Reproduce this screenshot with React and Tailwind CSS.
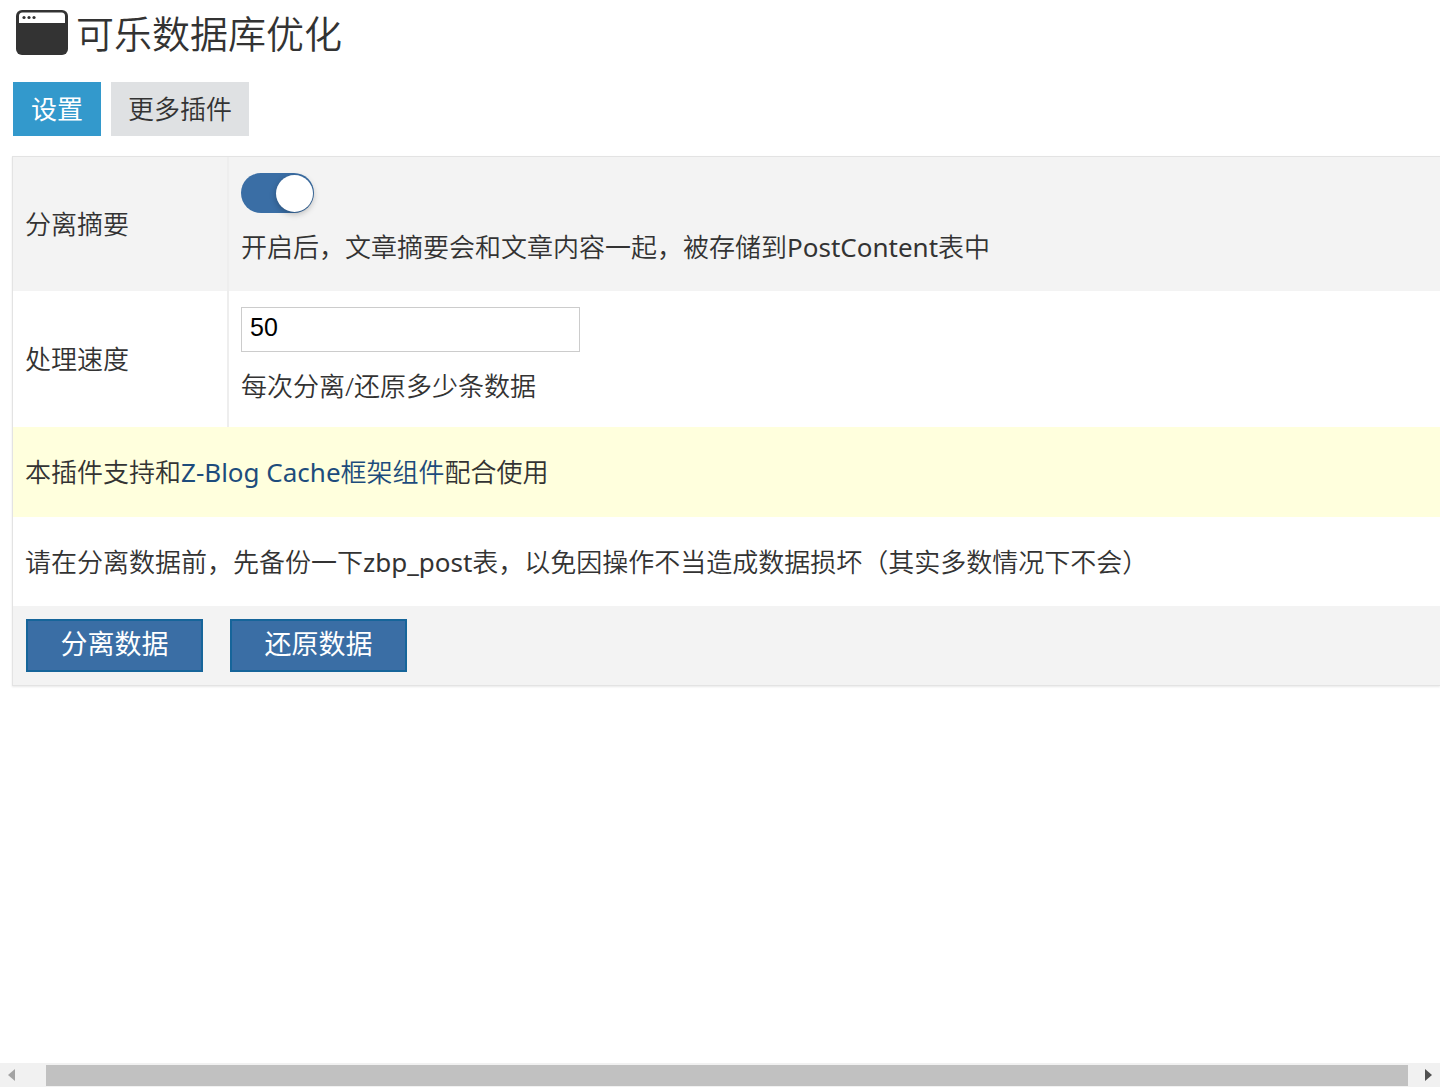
import React, { useState } from "react";

const WindowIcon = () => (
  <svg
    xmlns="http://www.w3.org/2000/svg"
    viewBox="0 0 52 46"
    className="w-[52px] h-[46px] shrink-0"
    aria-hidden="true"
  >
    <rect width="52" height="45" rx="6" fill="#333" />
    <path d="M3 13V6a3.500 3.500 0 013.500-3.500h39A3.500 3.500 0 0149 6v7z" fill="#fff" />
    <circle cx="8" cy="7.500" r="1.600" fill="#333" />
    <circle cx="13" cy="7.500" r="1.600" fill="#333" />
    <circle cx="18" cy="7.500" r="1.600" fill="#333" />
  </svg>
);

const ScrollBar = () => (
  <div className="flex items-center h-6 bg-[#f1f1f1]">
    <button type="button" aria-label="向左滚动" className="w-[46px] h-6 pl-2 flex items-center">
      <svg viewBox="0 0 7 12" className="w-[7px] h-3">
        <path d="M7 0v12L0 6z" fill="#a3a3a3" />
      </svg>
    </button>
    <div className="flex-1 h-[21px] bg-[#c1c1c1]" />
    <button type="button" aria-label="向右滚动" className="w-8 h-6 pr-2 flex items-center justify-end">
      <svg viewBox="0 0 7 12" className="w-[7px] h-3">
        <path d="M0 0v12l7-6z" fill="#505050" />
      </svg>
    </button>
  </div>
);

const buttonClass =
  "w-[177px] h-[53px] pb-1 border-2 border-[#16659a] bg-[#3a6ea5] text-[27px] leading-8 font-normal text-white";

const App = () => {
  const [separate, setSeparate] = useState(true);
  const [speed, setSpeed] = useState("50");

  return (
    <div className="min-h-screen flex flex-col overflow-hidden bg-white text-[#333] text-[26px] leading-9 font-[350] font-['Noto_Sans','Noto_Sans_CJK_SC',sans-serif]">
      <main className="flex-1 pl-3">
        <header className="flex items-center gap-2 h-[70px] pl-1 pb-1">
          <WindowIcon />
          <h1 className="text-[38px] leading-[56px]">可乐数据库优化</h1>
        </header>

        <nav className="flex gap-[10px] mt-3 pl-px leading-[54px]">
          <a href="#setting" className="px-[18px] bg-[#3399cc] font-normal text-white">
            设置
          </a>
          <a href="#more" className="px-[17px] bg-[#dfe1e3]">
            更多插件
          </a>
        </nav>

        <form className="mt-5" onSubmit={(e) => e.preventDefault()}>
          <table className="w-full border-separate border-spacing-0 text-left border border-r-0 border-[#e3e3e3] shadow-[0_1px_2px_#e8e8e8]">
            <tbody>
              <tr className="h-[134px] bg-[#f3f3f3]">
                <th className="w-[216px] px-3 font-[350] border-r-2 border-[#eeeeee]">
                  <label htmlFor="separate">分离摘要</label>
                </th>
                <td className="px-3 pt-4 align-top">
                  <input
                    id="separate"
                    type="checkbox"
                    role="switch"
                    checked={separate}
                    onChange={(e) => setSeparate(e.target.checked)}
                    className="appearance-none flex items-center w-[73px] h-10 px-px rounded-full bg-[#bbbbbb] checked:bg-[#3a6ea5] checked:justify-end before:w-[37px] before:h-[37px] before:rounded-full before:bg-white before:shadow-[0_2px_6px_#00000044]"
                  />
                  <p className="mt-4">
                    开启后，文章摘要会和文章内容一起，被存储到
                    <span className="font-normal">PostContent</span>表中
                  </p>
                </td>
              </tr>
              <tr className="h-[136px]">
                <th className="px-3 font-[350] border-r-2 border-[#eeeeee]">
                  <label htmlFor="speed">处理速度</label>
                </th>
                <td className="px-3 pt-4 align-top">
                  <input
                    id="speed"
                    type="text"
                    value={speed}
                    onChange={(e) => setSpeed(e.target.value)}
                    className="block w-[339px] h-[45px] px-2 pb-1 border border-[#cccccc] bg-white text-black text-[25px] font-['Liberation_Sans',sans-serif]"
                  />
                  <p className="mt-4">每次分离/还原多少条数据</p>
                </td>
              </tr>
              <tr className="h-[90px] bg-[#ffffdd]">
                <td colSpan={2} className="px-3">
                  本插件支持和
                  <a href="#cache" className="text-[#1d4c7c]">
                    <span className="font-normal">Z-Blog Cache</span>框架组件
                  </a>
                  配合使用
                </td>
              </tr>
              <tr className="h-[89px]">
                <td colSpan={2} className="px-3">
                  请在分离数据前，先备份一下
                  <span className="font-normal">zbp_post</span>
                  表，以免因操作不当造成数据损坏（其实多数情况下不会）
                </td>
              </tr>
              <tr className="h-[79px] bg-[#f3f3f3]">
                <td colSpan={2} className="px-[13px]">
                  <div className="flex gap-[27px]">
                    <button type="button" className={buttonClass}>
                      分离数据
                    </button>
                    <button type="button" className={buttonClass}>
                      还原数据
                    </button>
                  </div>
                </td>
              </tr>
            </tbody>
          </table>
        </form>
      </main>
      <ScrollBar />
    </div>
  );
};

export default App;
